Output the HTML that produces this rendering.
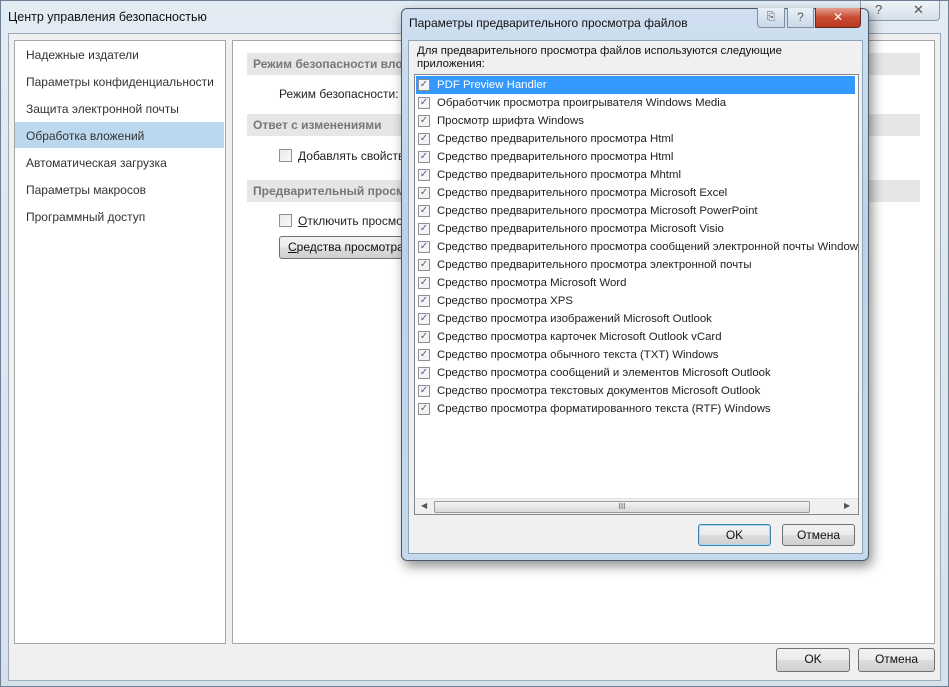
<!DOCTYPE html>
<html><head><meta charset="utf-8"><style>
*{margin:0;padding:0;box-sizing:border-box}
body{width:949px;height:687px;overflow:hidden;position:relative;background:#dce6f0;font-family:"Liberation Sans","DejaVu Sans",sans-serif;font-size:12px;color:#222}
.abs{position:absolute}
.outer{left:0;top:0;width:949px;height:687px;background:linear-gradient(#e3ebf3,#d6e1ec);border:1px solid #6d7f93}
.content{left:8px;top:33px;width:933px;height:648px;background:#f0f0f0;border:1px solid #9aaabb}
.panel{background:#fff;border:1px solid #a5a5a5}
.nav{left:26px;font-size:12px;color:#333}
.sec{left:247px;width:673px;height:22px;background:#e6e6e6;color:#777;font-weight:bold;font-size:12px;padding:4px 6px;white-space:nowrap;overflow:hidden}
.cb{width:13px;height:13px;border:1px solid #8e8f8f;background:linear-gradient(135deg,#e8e8e8,#fafafa)}
.btn{border:1px solid #707070;border-radius:3px;background:linear-gradient(#f2f2f2 0,#ebebeb 50%,#dddddd 51%,#cfcfcf 100%);text-align:center;font-size:12px;line-height:21px;color:#111}
.dlg{left:401px;top:8px;width:468px;height:553px;border:1px solid #4b5a6b;border-radius:6px;background:linear-gradient(#cfdff0,#bcd2e8 40%,#c6d9ec);box-shadow:3px 5px 12px rgba(0,0,0,.45)}
.row{left:0;height:18px;width:440px;white-space:nowrap;font-size:11.4px;line-height:18px}
.row .c{position:absolute;left:2px;top:3px;width:12px;height:12px;border:1px solid #8e8f8f;background:#f4f4f4;font-size:10px;line-height:10px;color:#4a5f8a;text-align:center}
.row span{position:absolute;left:21px}
</style></head><body>
<div class="abs outer"></div>
<div class="abs" style="left:8px;top:10px;font-size:12.5px;color:#111">Центр управления безопасностью</div>
<div class="abs" style="left:860px;top:1px;width:80px;height:20px;border:1px solid #8a9bb0;border-top:none;border-radius:0 0 4px 4px;background:linear-gradient(#eef3f8,#d6e1ec);color:#555;font-size:13px"><span style="position:absolute;left:14px;top:1px">?</span><span style="position:absolute;left:52px;top:1px">✕</span></div>
<div class="abs content"></div>
<div class="abs panel" style="left:14px;top:40px;width:212px;height:604px"></div>
<div class="abs" style="left:15px;top:122px;width:209px;height:26px;background:#bcd8ef"></div>
<div class="abs nav" style="top:48px">Надежные издатели</div>
<div class="abs nav" style="top:75px">Параметры конфиденциальности</div>
<div class="abs nav" style="top:102px">Защита электронной почты</div>
<div class="abs nav" style="top:129px">Обработка вложений</div>
<div class="abs nav" style="top:156px">Автоматическая загрузка</div>
<div class="abs nav" style="top:183px">Параметры макросов</div>
<div class="abs nav" style="top:210px">Программный доступ</div>
<div class="abs panel" style="left:232px;top:40px;width:703px;height:604px"></div>
<div class="abs sec" style="top:53px">Режим безопасности вложений</div>
<div class="abs" style="left:279px;top:87px">Режим безопасности:</div>
<div class="abs sec" style="top:114px">Ответ с изменениями</div>
<div class="abs cb" style="left:279px;top:149px"></div>
<div class="abs" style="left:298px;top:149px"><u>Д</u>обавлять свойства</div>
<div class="abs sec" style="top:180px">Предварительный просмотр</div>
<div class="abs cb" style="left:279px;top:214px"></div>
<div class="abs" style="left:298px;top:214px"><u>О</u>тключить просмотр</div>
<div class="abs btn" style="left:279px;top:236px;width:140px;height:23px;text-align:left;padding-left:8px"><u>С</u>редства просмотра</div>
<div class="abs btn" style="left:776px;top:648px;width:74px;height:24px">OK</div>
<div class="abs btn" style="left:858px;top:648px;width:77px;height:24px">Отмена</div>

<div class="abs dlg">
 <div class="abs" style="left:7px;top:7px;font-size:12px;color:#111">Параметры предварительного просмотра файлов</div>
 <div class="abs" style="left:355px;top:-1px;width:28px;height:20px;border:1px solid #7d8ea3;border-top:none;border-radius:0 0 0 4px;background:linear-gradient(#e9f0f7,#c9d8e8);text-align:center;font-size:11px;line-height:18px;color:#555">⎘</div>
 <div class="abs" style="left:385px;top:-1px;width:27px;height:20px;border:1px solid #7d8ea3;border-top:none;background:linear-gradient(#e9f0f7,#c9d8e8);text-align:center;font-size:12px;line-height:18px;color:#555">?</div>
 <div class="abs" style="left:413px;top:-1px;width:46px;height:20px;border:1px solid #6b2a20;border-top:none;border-radius:0 0 4px 0;background:linear-gradient(#e3a090,#c94b32 50%,#b83a22);text-align:center;font-size:12px;line-height:18px;color:#fff;font-weight:bold">✕</div>
 <div class="abs" style="left:6px;top:31px;width:455px;height:514px;background:#f0f0f0;border:1px solid #8ea2b8"></div>
 <div class="abs" style="left:15px;top:36px;font-size:11.4px;line-height:13px;color:#111">Для предварительного просмотра файлов используются следующие<br>приложения:</div>
 <div class="abs" style="left:12px;top:65px;width:445px;height:441px;background:#fff;border:1px solid #828790;overflow:hidden">
  <div class="abs" style="left:1px;top:1px;width:439px;height:18px;background:#3399ff"></div>
  <div style="position:absolute;left:1px;top:1px">
   <div class="abs row" style="top:0;color:#fff"><div class="c">✓</div><span>PDF Preview Handler</span></div>
   <div class="abs row" style="top:18px"><div class="c">✓</div><span>Обработчик просмотра проигрывателя Windows Media</span></div>
   <div class="abs row" style="top:36px"><div class="c">✓</div><span>Просмотр шрифта Windows</span></div>
   <div class="abs row" style="top:54px"><div class="c">✓</div><span>Средство предварительного просмотра Html</span></div>
   <div class="abs row" style="top:72px"><div class="c">✓</div><span>Средство предварительного просмотра Html</span></div>
   <div class="abs row" style="top:90px"><div class="c">✓</div><span>Средство предварительного просмотра Mhtml</span></div>
   <div class="abs row" style="top:108px"><div class="c">✓</div><span>Средство предварительного просмотра Microsoft Excel</span></div>
   <div class="abs row" style="top:126px"><div class="c">✓</div><span>Средство предварительного просмотра Microsoft PowerPoint</span></div>
   <div class="abs row" style="top:144px"><div class="c">✓</div><span>Средство предварительного просмотра Microsoft Visio</span></div>
   <div class="abs row" style="top:162px"><div class="c">✓</div><span>Средство предварительного просмотра сообщений электронной почты Windows</span></div>
   <div class="abs row" style="top:180px"><div class="c">✓</div><span>Средство предварительного просмотра электронной почты</span></div>
   <div class="abs row" style="top:198px"><div class="c">✓</div><span>Средство просмотра Microsoft Word</span></div>
   <div class="abs row" style="top:216px"><div class="c">✓</div><span>Средство просмотра XPS</span></div>
   <div class="abs row" style="top:234px"><div class="c">✓</div><span>Средство просмотра изображений Microsoft Outlook</span></div>
   <div class="abs row" style="top:252px"><div class="c">✓</div><span>Средство просмотра карточек Microsoft Outlook vCard</span></div>
   <div class="abs row" style="top:270px"><div class="c">✓</div><span>Средство просмотра обычного текста (TXT) Windows</span></div>
   <div class="abs row" style="top:288px"><div class="c">✓</div><span>Средство просмотра сообщений и элементов Microsoft Outlook</span></div>
   <div class="abs row" style="top:306px"><div class="c">✓</div><span>Средство просмотра текстовых документов Microsoft Outlook</span></div>
   <div class="abs row" style="top:324px"><div class="c">✓</div><span>Средство просмотра форматированного текста (RTF) Windows</span></div>
  </div>
  <div class="abs" style="left:0;top:423px;width:443px;height:17px;background:#f0f0f0;border-top:1px solid #e3e3e3">
   <div class="abs" style="left:6px;top:2px;font-size:8px;color:#555">◀</div>
   <div class="abs" style="left:19px;top:2px;width:376px;height:12px;border:1px solid #9a9a9a;border-radius:2px;background:linear-gradient(#f3f3f3,#d9d9d9);text-align:center;font-size:8px;line-height:10px;color:#555">III</div>
   <div class="abs" style="left:429px;top:2px;font-size:8px;color:#555">▶</div>
  </div>
 </div>
 <div class="abs btn" style="left:296px;top:515px;width:73px;height:22px;border-color:#3c7fb1;box-shadow:inset 0 0 0 1px #a7d8f5">OK</div>
 <div class="abs btn" style="left:380px;top:515px;width:73px;height:22px">Отмена</div>
</div>
</body></html>
